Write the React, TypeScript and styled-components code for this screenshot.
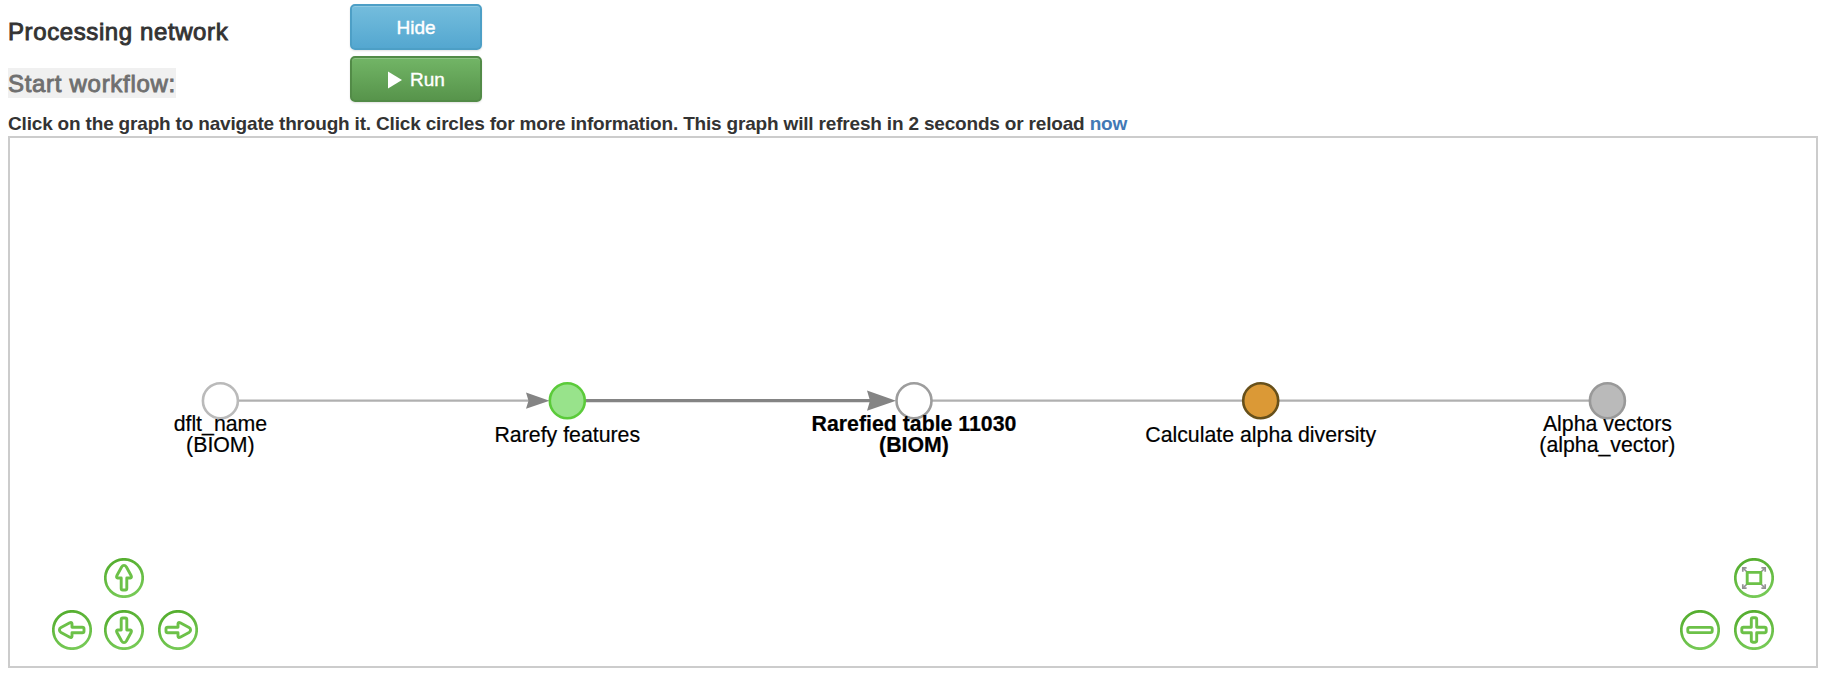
import React from "react";
import styled, { createGlobalStyle } from "styled-components";

const GlobalStyle = createGlobalStyle`
  *, *::before, *::after { box-sizing: border-box; }
  body {
    margin: 0;
    background: #fff;
    color: #333;
    font-family: "Liberation Sans", Arial, sans-serif;
  }
`;

const Page = styled.main`
  width: 1834px;
  height: 676px;
  padding: 4px 16px 8px 8px;
  display: flex;
  flex-direction: column;
`;

const ControlRow = styled.div`
  display: flex;
  height: 46px;
  margin-bottom: 6px;
`;

const TitleCell = styled.div`
  width: 342px;
  padding-top: 12px;
`;

const Title = styled.h4<{ $muted?: boolean }>`
  display: inline-block;
  margin: 0;
  height: 30px;
  font-size: 24px;
  font-weight: 400;
  line-height: 32px;
  white-space: nowrap;
  letter-spacing: ${(p) => (p.$muted ? "0.7px" : "0.6px")};
  color: ${(p) => (p.$muted ? "#6f6f6f" : "#333")};
  background: ${(p) => (p.$muted ? "#f0f0f0" : "transparent")};
  -webkit-text-stroke: 0.9px currentColor;
`;

const ActionButton = styled.button<{ $tone: "info" | "success" }>`
  width: 132px;
  height: 46px;
  padding: 2px 0 0;
  display: flex;
  align-items: center;
  justify-content: center;
  gap: 8px;
  border: 2px solid ${(p) => (p.$tone === "info" ? "#4d9fc6" : "#528b47")};
  border-radius: 5px;
  background: ${(p) =>
    p.$tone === "info"
      ? "linear-gradient(#74bddd, #54a7d0)"
      : "linear-gradient(#72b566, #57944b)"};
  box-shadow: inset 0 1px 0 rgba(255, 255, 255, 0.2), 0 1px 2px rgba(0, 0, 0, 0.12);
  color: #fff;
  font-family: inherit;
  font-size: 19px;
  -webkit-text-stroke: 0.4px #fff;
`;

const PlayIcon = styled.svg`
  display: block;
  margin-left: 1px;
`;

const Hint = styled.div`
  height: 28px;
  font-size: 19px;
  font-weight: 700;
  line-height: 32px;
  letter-spacing: -0.18px;
  white-space: nowrap;
`;

const ReloadLink = styled.a`
  color: #4279b5;
  text-decoration: none;
`;

const Frame = styled.section`
  position: relative;
  width: 1810px;
  height: 532px;
  border: 2px solid #ccc;
`;

const Graph = styled.svg`
  display: block;
  width: 1806px;
  height: 528px;
`;

const Label = styled.text<{ $bold?: boolean }>`
  font-size: 21.3px;
  font-weight: ${(p) => (p.$bold ? 700 : 400)};
  text-anchor: middle;
  fill: #000;
  stroke: #000;
  stroke-width: 0.2px;
`;

const Navigation = styled.nav<{ $side: "left" | "right" }>`
  position: absolute;
  bottom: 16px;
  ${(p) => (p.$side === "left" ? "left: 42px;" : "right: 42px;")}
  display: grid;
  grid-template-columns: ${(p) => (p.$side === "left" ? "52px 54px 40px" : "54px 40px")};
  row-gap: 12px;
`;

const NavButton = styled.button<{ $column: number; $row: number }>`
  grid-column: ${(p) => p.$column};
  grid-row: ${(p) => p.$row};
  width: 40px;
  height: 40px;
  padding: 0;
  border: 0;
  background: none;

  svg {
    display: block;
  }
`;

type GraphNode = {
  x: number;
  fill: string;
  stroke: string;
  lines: string[];
  bold?: boolean;
};

const NODE_Y = 262.7;

const nodes: GraphNode[] = [
  { x: 210.4, fill: "#fff", stroke: "#bababa", lines: ["dflt_name", "(BIOM)"] },
  { x: 557.3, fill: "#98e38b", stroke: "#5bcb3a", lines: ["Rarefy features"] },
  { x: 904, fill: "#fff", stroke: "#9d9d9d", lines: ["Rarefied table 11030", "(BIOM)"], bold: true },
  { x: 1250.7, fill: "#db9936", stroke: "#67501a", lines: ["Calculate alpha diversity"] },
  { x: 1597.4, fill: "#bababa", stroke: "#999", lines: ["Alpha vectors", "(alpha_vector)"] },
];

const edges = [
  { from: 210, to: 520, width: 2.2, color: "#b0b0b0" },
  { from: 557, to: 862, width: 3.3, color: "#848484" },
  { from: 904, to: 1250, width: 2.2, color: "#b0b0b0" },
  { from: 1250, to: 1597, width: 2.2, color: "#b0b0b0" },
];

const icons = {
  up: "M20 7.4 Q21.4 7.4 22.4 9 L27.2 17.8 Q28 19.7 26.2 20 H22.8 V30.2 Q22.8 32 21.2 32 H18.8 Q17.2 32 17.2 30.2 V20 H13.8 Q12 19.7 12.8 17.8 L17.6 9 Q18.6 7.4 20 7.4 Z",
  minus: "M9.4 17.4 H30.6 Q32.2 17.4 32.2 19 V21 Q32.2 22.6 30.6 22.6 H9.4 Q7.8 22.6 7.8 21 V19 Q7.8 17.4 9.4 17.4 Z",
  plus: "M18.8 7.8 H21.2 Q22.7 7.8 22.7 9.6 V17.3 H30.6 Q32.2 17.3 32.2 19 V21 Q32.2 22.7 30.6 22.7 H22.7 V30.6 Q22.7 32.2 21.2 32.2 H18.8 Q17.3 32.2 17.3 30.6 V22.7 H9.4 Q7.8 22.7 7.8 21 V19 Q7.8 17.3 9.4 17.3 H17.3 V9.6 Q17.3 7.8 18.8 7.8 Z",
  fit: "M13.2 14.4 H26.8 V25.6 H13.2 Z",
};

type IconProps = { id: string; shape: keyof typeof icons; turn?: number };

function NavIcon({ id, shape, turn = 0 }: IconProps) {
  return (
    <svg width="40" height="40" viewBox="0 0 40 40" fill="none">
      <defs>
        <linearGradient id={id} gradientUnits="userSpaceOnUse" x1="14" y1="0" x2="26" y2="40">
          <stop offset="0" stopColor="#54ad2e" />
          <stop offset="1" stopColor="#78cb58" />
        </linearGradient>
      </defs>
      <circle cx="20" cy="20" r="18.7" stroke={`url(#${id})`} strokeWidth="2.7" />
      {shape === "fit" && (
        <g stroke="#929292" strokeWidth="1.7">
          <path d="M13 14 L9 10 M27 14 L31 10 M13 26 L9 30 M27 26 L31 30" />
          <path d="M8.8 13.8 V9.8 H12.6 M27.4 9.8 H31.2 V13.8 M8.8 26.2 V30.2 H12.6 M27.4 30.2 H31.2 V26.2" />
        </g>
      )}
      <path
        d={icons[shape]}
        transform={`rotate(${turn} 20 20)`}
        stroke="#6cc148"
        strokeWidth="2.9"
        strokeLinejoin="round"
      />
    </svg>
  );
}

export default function App() {
  return (
    <>
      <GlobalStyle />
      <Page>
        <ControlRow>
          <TitleCell>
            <Title>Processing network</Title>
          </TitleCell>
          <ActionButton $tone="info">Hide</ActionButton>
        </ControlRow>
        <ControlRow>
          <TitleCell>
            <Title $muted>Start workflow:</Title>
          </TitleCell>
          <ActionButton $tone="success">
            <PlayIcon width="14" height="18" viewBox="0 0 14 18">
              <path d="M0 0.5 L14 9 L0 17.5 Z" fill="#fff" />
            </PlayIcon>
            Run
          </ActionButton>
        </ControlRow>
        <Hint>
          Click on the graph to navigate through it. Click circles for more information. This graph
          will refresh in 2 seconds or reload <ReloadLink>now</ReloadLink>
        </Hint>
        <Frame>
          <Graph viewBox="0 0 1806 528">
            {edges.map((edge) => (
              <line
                key={edge.from}
                x1={edge.from}
                x2={edge.to}
                y1={NODE_Y}
                y2={NODE_Y}
                stroke={edge.color}
                strokeWidth={edge.width}
              />
            ))}
            <path d="M516 254.6 L539.5 262.7 L516 270.8 L518.5 262.7 Z" fill="#848484" />
            <path d="M857 252.6 L886 262.7 L857 272.8 L860 262.7 Z" fill="#848484" />
            {nodes.map((node) => (
              <g key={node.x}>
                <circle
                  cx={node.x}
                  cy={NODE_Y}
                  r="17.5"
                  fill={node.fill}
                  stroke={node.stroke}
                  strokeWidth="2.6"
                />
                {node.lines.map((line, i) => (
                  <Label
                    key={line}
                    $bold={node.bold}
                    x={node.x}
                    y={(node.lines.length > 1 ? 293 : 304) + i * 21.3}
                  >
                    {line}
                  </Label>
                ))}
              </g>
            ))}
          </Graph>
          <Navigation $side="left">
            <NavButton $column={2} $row={1} aria-label="Move up">
              <NavIcon id="ring-up" shape="up" />
            </NavButton>
            <NavButton $column={1} $row={2} aria-label="Move left">
              <NavIcon id="ring-left" shape="up" turn={-90} />
            </NavButton>
            <NavButton $column={2} $row={2} aria-label="Move down">
              <NavIcon id="ring-down" shape="up" turn={180} />
            </NavButton>
            <NavButton $column={3} $row={2} aria-label="Move right">
              <NavIcon id="ring-right" shape="up" turn={90} />
            </NavButton>
          </Navigation>
          <Navigation $side="right">
            <NavButton $column={2} $row={1} aria-label="Fit graph">
              <NavIcon id="ring-fit" shape="fit" />
            </NavButton>
            <NavButton $column={1} $row={2} aria-label="Zoom out">
              <NavIcon id="ring-minus" shape="minus" />
            </NavButton>
            <NavButton $column={2} $row={2} aria-label="Zoom in">
              <NavIcon id="ring-plus" shape="plus" />
            </NavButton>
          </Navigation>
        </Frame>
      </Page>
    </>
  );
}
